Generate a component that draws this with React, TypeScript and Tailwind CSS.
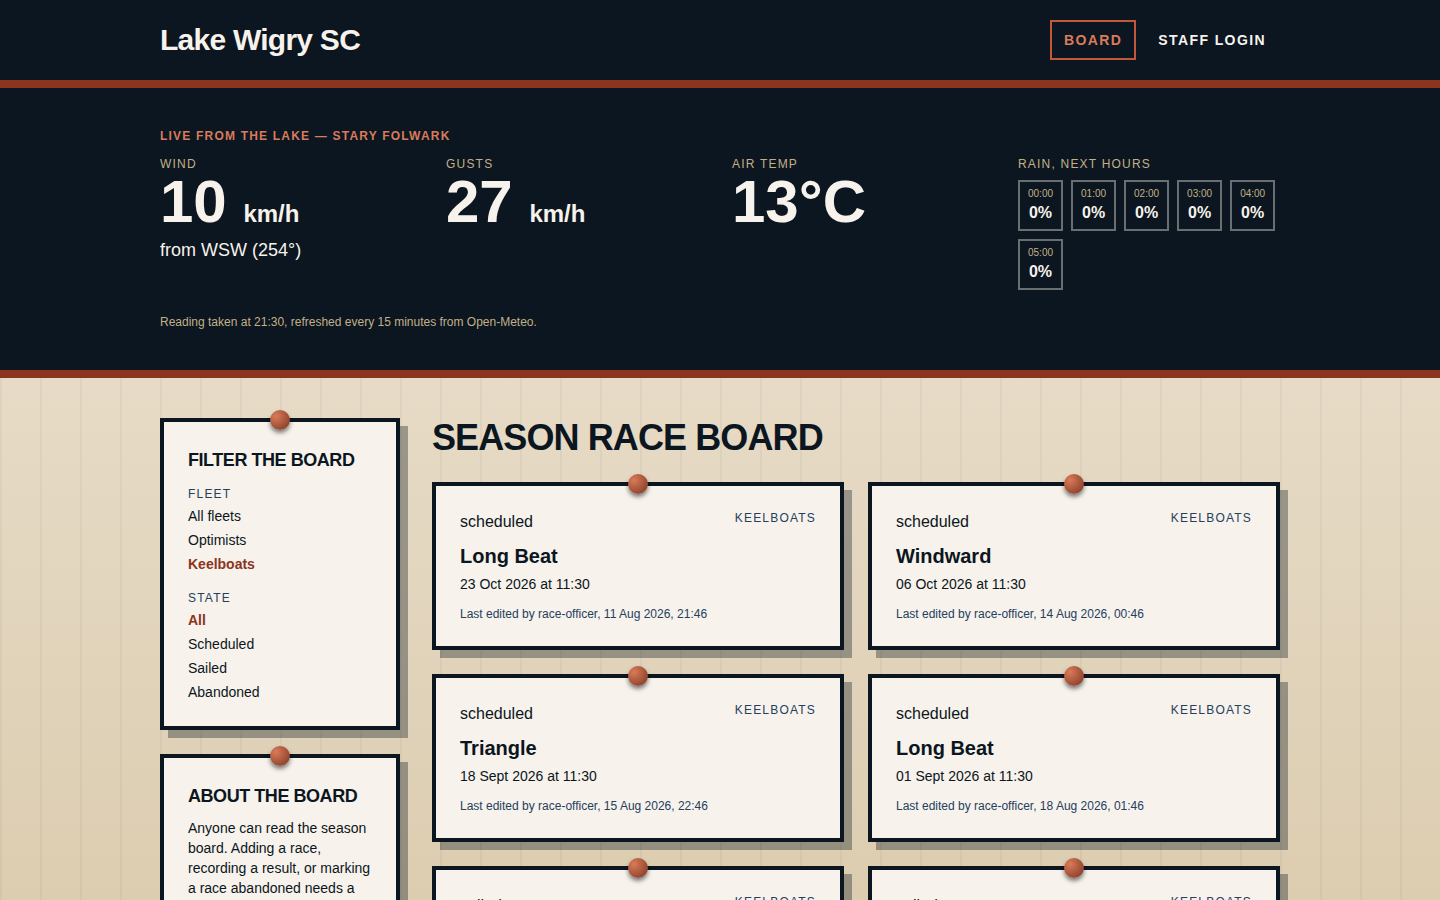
import type { ReactNode } from "react";

type Race = {
  id: number;
  state: string;
  fleet: string;
  name: string;
  date: string;
  edited: string;
};

const rainHours = ["00:00", "01:00", "02:00", "03:00", "04:00", "05:00"];

const fleets = ["All fleets", "Optimists", "Keelboats"];
const states = ["All", "Scheduled", "Sailed", "Abandoned"];

const races: Race[] = [
  { id: 1, state: "scheduled", fleet: "Keelboats", name: "Long Beat", date: "23 Oct 2026 at 11:30", edited: "11 Aug 2026, 21:46" },
  { id: 2, state: "scheduled", fleet: "Keelboats", name: "Windward", date: "06 Oct 2026 at 11:30", edited: "14 Aug 2026, 00:46" },
  { id: 3, state: "scheduled", fleet: "Keelboats", name: "Triangle", date: "18 Sept 2026 at 11:30", edited: "15 Aug 2026, 22:46" },
  { id: 4, state: "scheduled", fleet: "Keelboats", name: "Long Beat", date: "01 Sept 2026 at 11:30", edited: "18 Aug 2026, 01:46" },
  { id: 5, state: "sailed", fleet: "Keelboats", name: "Windward", date: "15 Aug 2026 at 11:30", edited: "15 Aug 2026, 20:46" },
  { id: 6, state: "sailed", fleet: "Keelboats", name: "Triangle", date: "29 July 2026 at 11:30", edited: "29 July 2026, 19:46" },
];

function PinnedCard({ children }: { children: ReactNode }) {
  return (
    <div className="relative border-4 border-[#0b1620] bg-[#f7f2ec] p-6 shadow-[8px_8px_0_rgba(11,22,32,0.35)]">
      <span
        aria-hidden="true"
        className="absolute -top-3 left-1/2 size-5 -translate-x-1/2 rounded-full bg-[radial-gradient(circle_at_30%_30%,#d97b58,#7a3320)] shadow-[0_3px_4px_rgba(0,0,0,0.5)]"
      />
      {children}
    </div>
  );
}

function FilterList({ label, options, active }: { label: string; options: string[]; active: string }) {
  return (
    <div>
      <h3 className="text-xs tracking-widest text-[#24405c] uppercase">{label}</h3>
      <ul className="mt-1 space-y-1 text-sm">
        {options.map((option) => (
          <li key={option}>
            <a
              href="#board"
              aria-current={option === active ? "true" : undefined}
              className={option === active ? "block font-bold text-[#8b3520]" : "block"}
            >
              {option}
            </a>
          </li>
        ))}
      </ul>
    </div>
  );
}

function Reading({ label, value, unit, note }: { label: string; value: string; unit?: string; note?: string }) {
  return (
    <div>
      <p className="text-xs tracking-widest text-[#c4b087] uppercase">{label}</p>
      <p className="text-6xl leading-none font-bold">
        {value} {unit && <span className="text-2xl leading-none">{unit}</span>}
      </p>
      {note && <p className="mt-1 text-lg leading-7">{note}</p>}
    </div>
  );
}

function RaceCard({ race }: { race: Race }) {
  return (
    <PinnedCard>
      <div className="flex items-start justify-between">
        <span>{race.state}</span>
        <span className="text-xs tracking-widest text-[#24405c] uppercase">{race.fleet}</span>
      </div>
      <h3 className="mt-2 text-xl leading-7 font-bold">{race.name}</h3>
      <p className="mt-1 text-sm tabular-nums">{race.date}</p>
      <p className="mt-3 text-xs text-[#24405c] tabular-nums">Last edited by race-officer, {race.edited}</p>
    </PinnedCard>
  );
}

export default function App() {
  return (
    <div className="min-h-screen bg-[#e8dcc8] font-['Liberation_Sans',Arial,sans-serif] text-[#0b1620]">
      <header className="border-b-8 border-[#8b3520] bg-[#0b1620] text-[#f7f2ec]">
        <div className="mx-auto flex max-w-6xl items-center justify-between px-4 py-5">
          <a href="#board" className="text-3xl leading-9 font-bold tracking-tight">Lake Wigry SC</a>
          <nav className="flex gap-2 text-sm font-bold tracking-widest uppercase">
            <a href="#board" aria-current="page" className="border-2 border-[#c2583a] px-3 py-2 text-[#d97b5c]">Board</a>
            <a href="#login" className="border-2 border-transparent px-3 py-2">Staff login</a>
          </nav>
        </div>
      </header>

      <section className="border-b-8 border-[#8b3520] bg-[#0b1620] text-[#f7f2ec]">
        <div className="mx-auto max-w-6xl px-4 py-10">
          <h2 className="text-xs font-bold tracking-widest text-[#d97b5c] uppercase">Live from the lake — Stary Folwark</h2>
          <div className="mt-3 grid grid-cols-2 gap-6 lg:grid-cols-4">
            <Reading label="Wind" value="10" unit="km/h" note="from WSW (254°)" />
            <Reading label="Gusts" value="27" unit="km/h" />
            <Reading label="Air temp" value="13°C" />
            <div>
              <p className="text-xs tracking-widest text-[#c4b087] uppercase">Rain, next hours</p>
              <ul className="mt-2 flex flex-wrap gap-2">
                {rainHours.map((hour) => (
                  <li key={hour} className="border-2 border-[#f7f2ec]/40 px-2 py-1 text-center">
                    <p className="text-[10px] leading-[15px] text-[#c4b087]">{hour}</p>
                    <p className="leading-6 font-bold">0%</p>
                  </li>
                ))}
              </ul>
            </div>
          </div>
          <p className="mt-6 text-xs text-[#c4b087]">Reading taken at 21:30, refreshed every 15 minutes from Open-Meteo.</p>
        </div>
      </section>

      <div className="bg-[repeating-linear-gradient(90deg,rgba(11,22,32,0.04)_0px,rgba(11,22,32,0.04)_2px,transparent_2px,transparent_40px),linear-gradient(180deg,#e7dbc7_0px,#dccdb0_522px,#d6c6a5_800px)]">
        <main id="board" className="mx-auto grid max-w-6xl items-start gap-8 px-4 py-10 md:grid-cols-[240px_1fr]">
          <aside className="space-y-6">
            <PinnedCard>
              <h2 className="text-lg leading-7 font-bold tracking-tight uppercase">Filter the board</h2>
              <div className="mt-3 space-y-4">
                <FilterList label="Fleet" options={fleets} active="Keelboats" />
                <FilterList label="State" options={states} active="All" />
              </div>
            </PinnedCard>
            <PinnedCard>
              <h2 className="text-lg leading-7 font-bold tracking-tight uppercase">About the board</h2>
              <p className="mt-2 text-sm">
                Anyone can read the season board. Adding a race, recording a result, or marking a race abandoned needs a
                staff login.
              </p>
            </PinnedCard>
          </aside>
          <section>
            <h1 className="text-4xl leading-10 font-bold tracking-tight uppercase">Season race board</h1>
            <div className="mt-6 grid gap-6 lg:grid-cols-2">
              {races.map((race) => (
                <RaceCard key={race.id} race={race} />
              ))}
            </div>
          </section>
        </main>
      </div>
    </div>
  );
}
